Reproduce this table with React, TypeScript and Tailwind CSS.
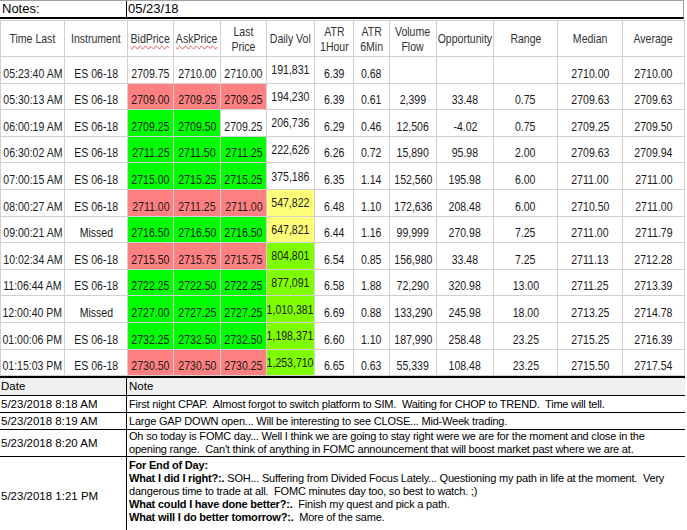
import React from "react";

type Tone = "none" | "red" | "green" | "yellow" | "lime";

type Row = {
  time: string;
  inst: string;
  bid: string;
  ask: string;
  last: string;
  vol: string;
  atr1: string;
  atr6: string;
  flow: string;
  opp: string;
  range: string;
  median: string;
  avg: string;
  bidTone: Tone;
  askTone: Tone;
  lastTone: Tone;
  volTone: Tone;
};

const r = (v: string[], tones: [Tone, Tone, Tone, Tone]): Row => ({
  time: v[0],
  inst: v[1],
  bid: v[2],
  ask: v[3],
  last: v[4],
  vol: v[5],
  atr1: v[6],
  atr6: v[7],
  flow: v[8],
  opp: v[9],
  range: v[10],
  median: v[11],
  avg: v[12],
  bidTone: tones[0],
  askTone: tones[1],
  lastTone: tones[2],
  volTone: tones[3],
});

const rows: Row[] = [
  r(["05:23:40 AM", "ES 06-18", "2709.75", "2710.00", "2710.00", "191,831", "6.39", "0.68", "", "", "", "2710.00", "2710.00"], ["none", "none", "none", "none"]),
  r(["05:30:13 AM", "ES 06-18", "2709.00", "2709.25", "2709.25", "194,230", "6.39", "0.61", "2,399", "33.48", "0.75", "2709.63", "2709.63"], ["red", "red", "red", "none"]),
  r(["06:00:19 AM", "ES 06-18", "2709.25", "2709.50", "2709.25", "206,736", "6.29", "0.46", "12,506", "-4.02", "0.75", "2709.25", "2709.50"], ["green", "green", "none", "none"]),
  r(["06:30:02 AM", "ES 06-18", "2711.25", "2711.50", "2711.25", "222,626", "6.26", "0.72", "15,890", "95.98", "2.00", "2709.63", "2709.94"], ["green", "green", "green", "none"]),
  r(["07:00:15 AM", "ES 06-18", "2715.00", "2715.25", "2715.25", "375,186", "6.35", "1.14", "152,560", "195.98", "6.00", "2711.00", "2711.00"], ["green", "green", "green", "none"]),
  r(["08:00:27 AM", "ES 06-18", "2711.00", "2711.25", "2711.00", "547,822", "6.48", "1.10", "172,636", "208.48", "6.00", "2710.50", "2711.00"], ["red", "red", "red", "yellow"]),
  r(["09:00:21 AM", "Missed", "2716.50", "2716.50", "2716.50", "647,821", "6.44", "1.16", "99,999", "270.98", "7.25", "2711.00", "2711.79"], ["green", "green", "green", "yellow"]),
  r(["10:02:34 AM", "ES 06-18", "2715.50", "2715.75", "2715.75", "804,801", "6.54", "0.85", "156,980", "33.48", "7.25", "2711.13", "2712.28"], ["red", "red", "red", "lime"]),
  r(["11:06:44 AM", "ES 06-18", "2722.25", "2722.50", "2722.25", "877,091", "6.58", "1.88", "72,290", "320.98", "13.00", "2711.25", "2713.39"], ["green", "green", "green", "lime"]),
  r(["12:00:40 PM", "Missed", "2727.00", "2727.25", "2727.25", "1,010,381", "6.69", "0.88", "133,290", "245.98", "18.00", "2713.25", "2714.78"], ["green", "green", "green", "lime"]),
  r(["01:00:06 PM", "ES 06-18", "2732.25", "2732.50", "2732.50", "1,198,371", "6.60", "1.10", "187,990", "258.48", "23.25", "2715.25", "2716.39"], ["green", "green", "green", "lime"]),
  r(["01:15:03 PM", "ES 06-18", "2730.50", "2730.50", "2730.25", "1,253,710", "6.65", "0.63", "55,339", "108.48", "23.25", "2715.50", "2717.54"], ["red", "red", "red", "lime"]),
];

const toneBg: Record<Tone, string> = {
  none: "bg-white",
  red: "bg-[#ff8080]",
  green: "bg-[#00ff00]",
  yellow: "bg-[#ffff78]",
  lime: "bg-[#80ff00]",
};

// no Arial Narrow on the box, so squeeze Arial metrics horizontally
function Narrow({ children }: { children?: React.ReactNode }) {
  return <span className="inline-block scale-x-[0.78] origin-center">{children}</span>;
}

function Cell({
  children,
  tone = "none",
  first = false,
  mid = false,
}: {
  children?: React.ReactNode;
  tone?: Tone;
  first?: boolean;
  mid?: boolean;
}) {
  return (
    <div
      className={`h-[26.6px] flex justify-center whitespace-nowrap border-r border-b border-[#d0d0d0] ${
        first ? "border-l" : ""
      } ${mid ? "items-center pt-[1px]" : "items-end pb-[1px]"} ${toneBg[tone]}`}
    >
      <Narrow>{children}</Narrow>
    </div>
  );
}

function Head({ children, first = false }: { children: React.ReactNode; first?: boolean }) {
  return (
    <div
      className={`h-[36px] flex items-center justify-center text-center leading-[15px] whitespace-nowrap border-r border-b border-[#d0d0d0] text-[#333] ${
        first ? "border-l" : ""
      }`}
    >
      <Narrow>{children}</Narrow>
    </div>
  );
}

const spell = "underline decoration-wavy decoration-[#e04040] decoration-1 underline-offset-2";

function NoteRow({
  date,
  h,
  children,
  top = false,
}: {
  date: string;
  h: string;
  children: React.ReactNode;
  top?: boolean;
}) {
  return (
    <div className={`flex border-b border-black ${h}`}>
      <div className="w-[127px] shrink-0 pl-[1px] flex items-center border-r border-black">{date}</div>
      <div
        className={`pl-[2px] flex flex-col min-w-0 text-[11px] tracking-[-0.2px] ${
          top ? "pt-[2px]" : "justify-center"
        }`}
      >
        {children}
      </div>
    </div>
  );
}

export default function App() {
  return (
    <div className="w-[687px] h-[530px] overflow-hidden bg-white text-black [font-family:Liberation_Sans,Arial,sans-serif]">
      {/* notes header */}
      <div className="flex h-[19px] w-[684px] border-t border-r border-[#a0a0a0] border-b-2 border-b-black text-[13px] leading-[16px]">
        <div className="w-[127px] shrink-0 pl-[2px] border-r border-black">Notes:</div>
        <div className="pl-[1px]">05/23/18</div>
      </div>

      {/* price grid */}
      <div className="mt-[1px] w-[685px] grid grid-cols-[65px_63px_46px_47px_46px_48px_39px_36px_47px_57px_64px_65px_62px] border-t border-[#d0d0d0] text-[13.5px] leading-[16px] text-[#1a1a1a]">
        <Head first>Time Last</Head>
        <Head>Instrument</Head>
        <Head>
          <span className={spell}>BidPrice</span>
        </Head>
        <Head>
          <span className={spell}>AskPrice</span>
        </Head>
        <Head>
          Last
          <br />
          Price
        </Head>
        <Head>Daily Vol</Head>
        <Head>
          ATR
          <br />
          1Hour
        </Head>
        <Head>
          ATR
          <br />
          6Min
        </Head>
        <Head>
          Volume
          <br />
          Flow
        </Head>
        <Head>Opportunity</Head>
        <Head>Range</Head>
        <Head>Median</Head>
        <Head>Average</Head>

        {rows.map((row) => (
          <React.Fragment key={row.time}>
            <Cell first>{row.time}</Cell>
            <Cell>{row.inst}</Cell>
            <Cell tone={row.bidTone}>{row.bid}</Cell>
            <Cell tone={row.askTone}>{row.ask}</Cell>
            <Cell tone={row.lastTone}>{row.last}</Cell>
            <Cell tone={row.volTone} mid>
              {row.vol}
            </Cell>
            <Cell>{row.atr1}</Cell>
            <Cell>{row.atr6}</Cell>
            <Cell>{row.flow}</Cell>
            <Cell>{row.opp}</Cell>
            <Cell>{row.range}</Cell>
            <Cell>{row.median}</Cell>
            <Cell>{row.avg}</Cell>
          </React.Fragment>
        ))}
      </div>

      {/* journal notes */}
      <div className="w-[685px] border-t-2 border-black text-[11.5px] leading-[13px] whitespace-pre">
        <div className="flex h-[18px] bg-[#f0f0f0] border-b border-black">
          <div className="w-[127px] shrink-0 pl-[1px] pt-[2px] border-r border-black">Date</div>
          <div className="pl-[2px] pt-[2px]">Note</div>
        </div>
        <NoteRow date="5/23/2018 8:18 AM" h="h-[17px]">
          <div>First night CPAP.  Almost forgot to switch platform to SIM.  Waiting for CHOP to TREND.  Time will tell.</div>
        </NoteRow>
        <NoteRow date="5/23/2018 8:19 AM" h="h-[17px]">
          <div>Large GAP DOWN open... Will be interesting to see CLOSE... Mid-Week trading.</div>
        </NoteRow>
        <NoteRow date="5/23/2018 8:20 AM" h="h-[27px]">
          <div>Oh so today is FOMC day... Well I think we are going to stay right were we are for the moment and close in the</div>
          <div>opening range.  Can't think of anything in FOMC announcement that will boost market past where we are at.</div>
        </NoteRow>
        <NoteRow date="5/23/2018 1:21 PM" h="h-[80px]" top>
          <div className="font-bold">For End of Day:</div>
          <div>
            <span className="font-bold">What I did I right?:.</span> SOH... Suffering from Divided Focus Lately... Questioning my path in life at the moment.  Very
          </div>
          <div>dangerous time to trade at all.  FOMC minutes day too, so best to watch. ;)</div>
          <div>
            <span className="font-bold">What could I have done better?:.</span>  Finish my quest and pick a path.
          </div>
          <div>
            <span className="font-bold">What will I do better tomorrow?:.</span>  More of the same.
          </div>
        </NoteRow>
      </div>
    </div>
  );
}
